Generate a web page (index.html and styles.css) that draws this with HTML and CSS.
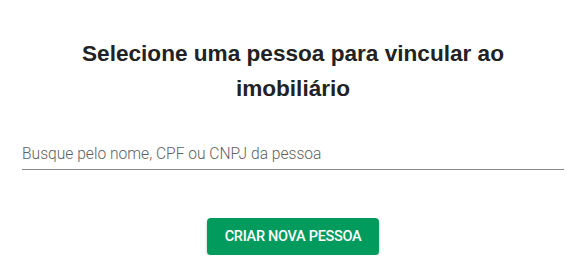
FILE: index.html
```html
<!DOCTYPE html>
<html lang="pt-BR">
<head>
    <meta charset="UTF-8">
    <title>Vincular pessoa</title>
    <link rel="stylesheet" href="styles.css">
</head>
<body>
    <div class="dialog">
        <h2 class="title">Selecione uma pessoa para vincular ao imobiliário</h2>
        <div class="search-field">
            <input type="text" class="search-input" placeholder="Busque pelo nome, CPF ou CNPJ da pessoa">
        </div>
        <div class="actions">
            <button class="btn-primary">Criar nova pessoa</button>
        </div>
    </div>
</body>
</html>
```

FILE: styles.css
```css
* {
    margin: 0;
    padding: 0;
    box-sizing: border-box;
}

body {
    background: #fff;
    font-family: Roboto, "Liberation Sans", sans-serif;
    color: #212121;
}

.dialog {
    padding: 36px 22px 0;
}

.title {
    font-family: "Liberation Sans", Arial, sans-serif;
    font-size: 22.6px;
    font-weight: 700;
    line-height: 35px;
    text-align: center;
    color: #222;
    padding: 0 50px;
}

.search-field {
    margin-top: 33px;
}

.search-input {
    width: 100%;
    border: none;
    border-bottom: 1px solid #8a8a8a;
    padding: 6px 0 6px;
    font-family: Roboto, sans-serif;
    font-size: 15.6px;
    font-weight: 300;
    color: #333;
    outline: none;
    background: transparent;
}

.search-input::placeholder {
    color: #5f5f5f;
}

.actions {
    display: flex;
    justify-content: center;
    margin-top: 48px;
}

.btn-primary {
    background: #019b5e;
    color: #fff;
    border: none;
    border-radius: 4px;
    padding: 0 18px;
    height: 37px;
    font-family: Roboto, sans-serif;
    font-weight: 500;
    font-size: 14.5px;
    text-transform: uppercase;
    letter-spacing: -0.3px;
    box-shadow: 0 2px 3px rgba(0, 0, 0, 0.25);
}
```
